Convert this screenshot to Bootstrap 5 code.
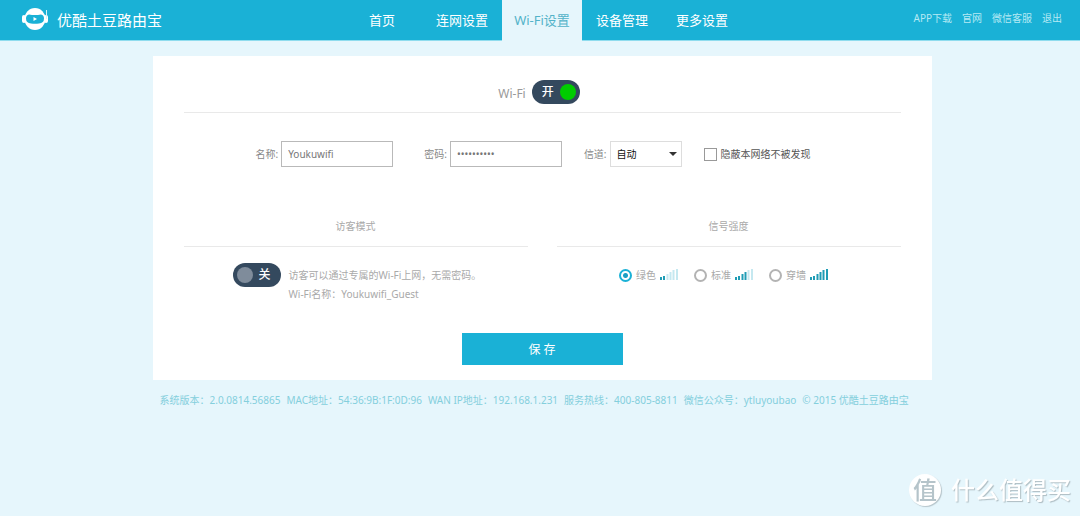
<!DOCTYPE html>
<html lang="zh-CN">
<head>
<meta charset="utf-8">
<meta name="viewport" content="width=device-width, initial-scale=1">
<title>优酷土豆路由宝</title>
<link href="https://cdn.jsdelivr.net/npm/bootstrap@5.3.0/dist/css/bootstrap.min.css" rel="stylesheet">
<style>
  body { background: #e6f6fc; color: #a9a9a9; font: 10px/20px "Noto Sans", "Noto Sans CJK SC", sans-serif; }
  .topbar { background: #1ab1d6; display: grid; grid-template-columns: 1fr auto 1fr; padding: 0 18px 0 22px; min-height: 40px; border-bottom: 1px solid #8fdcee; }
  .brand-name { font-size: 15px; color: #fff; margin-left: 8px; }
  .main-nav .nav-link { width: 80px; height: 40px; padding: 0; line-height: 40px; font-size: 13px; color: #fff; text-align: center; white-space: nowrap; margin-bottom: -1px; }
  .main-nav .nav-link.active { background: #e6f6fc; color: #53b3c9; height: 41px; }
  .util-links { gap: 10px; padding-bottom: 4px; }
  .util-links a { color: #b5e9f4; }
  .panel { max-width: 779px; margin: 15px auto 0; background: #fff; padding: 24px 31px 15px; }
  .wifi-row { border-bottom: 1px solid #e9e9e9; padding: 0 6px 8px 0; gap: 6px; font-size: 12px; color: #999; }
  .toggle { width: 48px; height: 24px; border-radius: 12px; background: #34495e; color: #fff; font-size: 12px; font-weight: 500; padding: 0 4px; cursor: pointer; }
  .toggle input { appearance: none; width: 16px; height: 16px; margin: 0; border-radius: 50%; background: #7f8c9b; }
  .toggle input:checked { background: #0c0; }
  .toggle span { flex: 1; text-align: center; }
  .settings { padding: 28px 0 0 72px; column-gap: 22px; color: #888; }
  .settings .form-control, .settings .form-select { height: 26px; min-height: 0; border: 1px solid #b9b9b9; border-radius: 0; padding: 0 6px; font-size: 10px; line-height: 20px; color: #777; }
  .settings .form-control { width: 112px; }
  .settings .form-select { width: 72px; border-color: #ddd; color: #111; background-image: url("data:image/svg+xml,%3Csvg xmlns='http://www.w3.org/2000/svg' viewBox='0 0 8 4'%3E%3Cpath d='M0 0h8L4 4z' fill='%23333'/%3E%3C/svg%3E"); background-size: 8px 4px; background-position: right 4px center; }
  .field { gap: 3px; }
  .field-name { margin-right: 9px; }
  .hide-net { gap: 4px; color: #555; }
  .hide-net .form-check-input[type=checkbox] { width: 13px; height: 13px; margin: 0; border: 1px solid #999; border-radius: 0; }
  .halves { display: grid; grid-template-columns: 1fr 1fr; column-gap: 29px; margin-top: 49px; }
  .halves h2 { font-size: 10px; line-height: 20px; font-weight: 400; text-align: center; margin: 0 0 16px; padding-bottom: 10px; border-bottom: 1px solid #e9e9e9; }
  .guest { gap: 8px; padding-left: 49px; }
  .guest p { line-height: 19px; padding-top: 3px; }
  .levels { gap: 16px; padding: 2px 10px 0 0; }
  .levels label { gap: 4px; height: 20px; }
  .levels svg { margin-bottom: 3px; }
  .levels input { appearance: none; width: 13px; height: 13px; margin: 0; border: 2px solid #b3b3b3; border-radius: 50%; }
  .levels input:checked { border-color: #1ab1d6; background: radial-gradient(circle, #1a9fc4 0 2px, #fff 3px); }
  .save { width: 161px; height: 32px; border-radius: 0; background: #1ab1d6; color: #fff; font-size: 12px; line-height: 32px; padding: 0; margin: 29px auto 0; display: block; }
  .save:hover { background: #169fc1; color: #fff; }
  .info { max-width: 779px; margin: 10px auto 0; padding: 0 7px; gap: 0 6px; color: #84cfdc; }
  .watermark { right: 9px; bottom: 9px; gap: 10px; color: #fff; font-size: 24px; font-weight: 500; line-height: 34px; text-shadow: 1px 1px 1px #aebdc3; }
  .watermark-seal { width: 32px; height: 32px; border-radius: 50%; background: #fff; color: #b5c4ca; font-size: 24px; line-height: 32px; text-align: center; text-shadow: none; box-shadow: 1px 1px 1px #b5c4ca; }
</style>
</head>
<body>
<header class="topbar">
  <a href="#" class="d-flex align-items-center text-decoration-none text-nowrap">
    <svg width="27" height="24" viewBox="0 0 27 24" aria-hidden="true">
      <ellipse cx="13" cy="11" rx="10.500" ry="11" fill="#fff"/>
      <rect x="0" y="7" width="4" height="8" rx="2" fill="#fff"/>
      <rect x="22" y="7" width="4" height="8" rx="2" fill="#fff"/>
      <path d="M24.500 2v9" stroke="#d5f2f8" stroke-width="1"/>
      <path d="M7 6.500Q13 7.500 19 6.500Q22 7 22 10.500Q22 15 17 15.500Q13 16 9 15.500Q4 15 4 10.500Q4 7 7 6.500Z" fill="#1ab1d6"/>
      <path d="M11.500 9v4l3.500-2z" fill="#fff"/>
    </svg>
    <span class="brand-name">优酷土豆路由宝</span>
  </a>
  <nav class="main-nav nav flex-nowrap">
    <a class="nav-link" href="#">首页</a>
    <a class="nav-link" href="#">连网设置</a>
    <a class="nav-link active" aria-current="page" href="#">Wi-Fi设置</a>
    <a class="nav-link" href="#">设备管理</a>
    <a class="nav-link" href="#">更多设置</a>
  </nav>
  <div class="util-links d-flex align-items-center justify-content-end text-nowrap">
    <a class="text-decoration-none" href="#">APP下载</a>
    <a class="text-decoration-none" href="#">官网</a>
    <a class="text-decoration-none" href="#">微信客服</a>
    <a class="text-decoration-none" href="#">退出</a>
  </div>
</header>

<main class="ps-1">
  <form class="panel">
    <div class="wifi-row d-flex justify-content-center align-items-center">
      <label for="wifi" class="pt-1">Wi-Fi</label>
      <label class="toggle d-flex align-items-center"><span>开</span><input type="checkbox" role="switch" id="wifi" checked></label>
    </div>

    <div class="settings d-flex flex-wrap align-items-center">
      <div class="field field-name d-flex align-items-center">
        <label for="ssid">名称:</label>
        <input class="form-control" id="ssid" type="text" value="Youkuwifi">
      </div>
      <div class="field d-flex align-items-center">
        <label for="pass">密码:</label>
        <input class="form-control" id="pass" type="password" value="youkuwifi1">
      </div>
      <div class="field d-flex align-items-center">
        <label for="channel">信道:</label>
        <select class="form-select" id="channel"><option>自动</option><option>1</option><option>6</option><option>11</option></select>
      </div>
      <label class="hide-net d-flex align-items-center"><input class="form-check-input" type="checkbox">隐蔽本网络不被发现</label>
    </div>

    <div class="halves">
      <section>
        <h2>访客模式</h2>
        <div class="guest d-flex align-items-start">
          <label class="toggle d-flex align-items-center"><input type="checkbox" role="switch"><span>关</span></label>
          <p class="mb-0">访客可以通过专属的Wi-Fi上网，无需密码。<br>Wi-Fi名称：Youkuwifi_Guest</p>
        </div>
      </section>
      <section>
        <h2>信号强度</h2>
        <div class="levels d-flex justify-content-center">
          <label class="d-flex align-items-center"><input type="radio" name="level" checked>绿色
            <svg width="18" height="12" viewBox="0 0 18 12" aria-hidden="true"><path d="M1 12V9M4 12V8" stroke="#1f9cb5" stroke-width="2"/><path d="M7.500 12V6M10.500 12V4M13.500 12V2M17 12V1" stroke="#c5e8f0" stroke-width="2"/></svg>
          </label>
          <label class="d-flex align-items-center"><input type="radio" name="level">标准
            <svg width="18" height="12" viewBox="0 0 18 12" aria-hidden="true"><path d="M1 12V9M4 12V8M7.500 12V6M10.500 12V4" stroke="#1f9cb5" stroke-width="2"/><path d="M13.500 12V2M17 12V1" stroke="#c5e8f0" stroke-width="2"/></svg>
          </label>
          <label class="d-flex align-items-center"><input type="radio" name="level">穿墙
            <svg width="18" height="12" viewBox="0 0 18 12" aria-hidden="true"><path d="M1 12V9M4 12V8M7.500 12V6M10.500 12V4M13.500 12V2M17 12V1" stroke="#1f9cb5" stroke-width="2"/></svg>
          </label>
        </div>
      </section>
    </div>

    <button type="submit" class="btn save">保 存</button>
  </form>

  <footer class="info d-flex flex-wrap">
    <span>系统版本：2.0.0814.56865</span>
    <span>MAC地址：54:36:9B:1F:0D:96</span>
    <span>WAN IP地址：192.168.1.231</span>
    <span>服务热线：400-805-8811</span>
    <span>微信公众号：ytluyoubao</span>
    <span>© 2015 优酷土豆路由宝</span>
  </footer>
</main>

<div class="watermark position-fixed d-flex align-items-center">
  <span class="watermark-seal">值</span>
  <span>什么值得买</span>
</div>
<script src="https://cdn.jsdelivr.net/npm/bootstrap@5.3.0/dist/js/bootstrap.bundle.min.js"></script>
</body>
</html>
